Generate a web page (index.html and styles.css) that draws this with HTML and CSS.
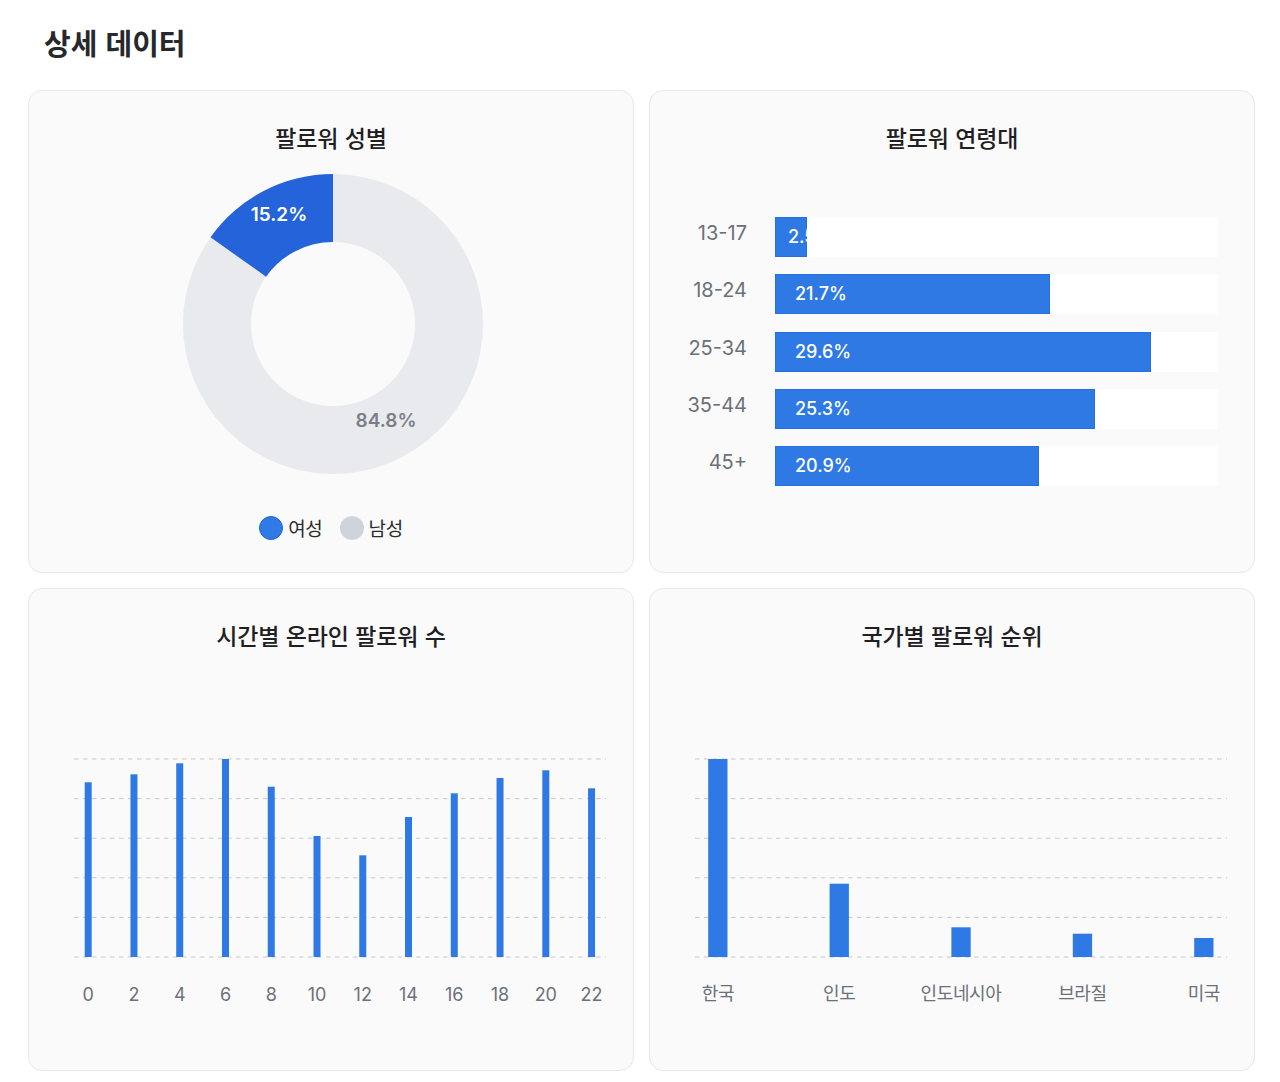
FILE: index.html
```html
<!DOCTYPE html>
<html lang="ko">
<head>
<meta charset="utf-8">
<title>상세 데이터</title>
<link rel="stylesheet" href="styles.css">
</head>
<body>
<main class="page">
  <h1 class="page-title">상세 데이터</h1>
  <section class="grid">
    <article class="card">
      <h2 class="card-title">팔로워 성별</h2>
      <svg class="chart" viewBox="0 0 604 340" width="604" height="340">
        <circle cx="304" cy="172" r="116" fill="none" stroke="#e9eaee" stroke-width="68"/>
        <path d="M304,22 A150,150 0 0 0 181.55,85.36 L237.06,124.64 A82,82 0 0 1 304,90 Z" fill="#2463da"/>
        <text class="pie-label pie-label-in" x="250" y="69">15.2%</text>
        <text class="pie-label pie-label-out" x="357" y="275">84.8%</text>
      </svg>
      <div class="legend">
        <span class="legend-item"><i class="dot dot-blue"></i>여성</span>
        <span class="legend-item"><i class="dot dot-gray"></i>남성</span>
      </div>
    </article>

    <article class="card">
      <h2 class="card-title">팔로워 연령대</h2>
      <div class="ages">
        <div class="age-row">
          <span class="age-label">13-17</span>
          <div class="track"><div class="bar bar-narrow" style="width:7.14%">2.5%</div></div>
        </div>
        <div class="age-row">
          <span class="age-label">18-24</span>
          <div class="track"><div class="bar" style="width:62%">21.7%</div></div>
        </div>
        <div class="age-row">
          <span class="age-label">25-34</span>
          <div class="track"><div class="bar" style="width:84.8%">29.6%</div></div>
        </div>
        <div class="age-row">
          <span class="age-label">35-44</span>
          <div class="track"><div class="bar" style="width:72.3%">25.3%</div></div>
        </div>
        <div class="age-row">
          <span class="age-label">45+</span>
          <div class="track"><div class="bar" style="width:59.7%">20.9%</div></div>
        </div>
      </div>
    </article>

    <article class="card">
      <h2 class="card-title">시간별 온라인 팔로워 수</h2>
      <svg class="chart" viewBox="0 0 604 390" width="604" height="390">
        <g class="grid-lines">
          <line x1="45" x2="577" y1="109" y2="109"/>
          <line x1="45" x2="577" y1="148.6" y2="148.6"/>
          <line x1="45" x2="577" y1="188.2" y2="188.2"/>
          <line x1="45" x2="577" y1="227.8" y2="227.8"/>
          <line x1="45" x2="577" y1="267.4" y2="267.4"/>
          <line x1="45" x2="577" y1="307" y2="307"/>
        </g>
        <g class="bars">
          <rect x="55.7" y="132.3" width="7" height="174.7"/>
          <rect x="101.46" y="124.3" width="7" height="182.7"/>
          <rect x="147.22" y="113.3" width="7" height="193.7"/>
          <rect x="192.98" y="109" width="7" height="198"/>
          <rect x="238.74" y="136.7" width="7" height="170.3"/>
          <rect x="284.5" y="186" width="7" height="121"/>
          <rect x="330.26" y="205.3" width="7" height="101.7"/>
          <rect x="376.02" y="167" width="7" height="140"/>
          <rect x="421.78" y="143.3" width="7" height="163.7"/>
          <rect x="467.54" y="128" width="7" height="179"/>
          <rect x="513.3" y="120.3" width="7" height="186.7"/>
          <rect x="559.06" y="138.3" width="7" height="168.7"/>
        </g>
        <g class="axis-num">
          <text x="59.2" y="351">0</text>
          <text x="104.96" y="351">2</text>
          <text x="150.72" y="351">4</text>
          <text x="196.48" y="351">6</text>
          <text x="242.24" y="351">8</text>
          <text x="288" y="351">10</text>
          <text x="333.76" y="351">12</text>
          <text x="379.52" y="351">14</text>
          <text x="425.28" y="351">16</text>
          <text x="471.04" y="351">18</text>
          <text x="516.8" y="351">20</text>
          <text x="562.56" y="351">22</text>
        </g>
      </svg>
    </article>

    <article class="card">
      <h2 class="card-title">국가별 팔로워 순위</h2>
      <svg class="chart" viewBox="0 0 604 390" width="604" height="390">
        <g class="grid-lines">
          <line x1="45" x2="577" y1="109" y2="109"/>
          <line x1="45" x2="577" y1="148.6" y2="148.6"/>
          <line x1="45" x2="577" y1="188.2" y2="188.2"/>
          <line x1="45" x2="577" y1="227.8" y2="227.8"/>
          <line x1="45" x2="577" y1="267.4" y2="267.4"/>
          <line x1="45" x2="577" y1="307" y2="307"/>
        </g>
        <g class="bars">
          <rect x="58.2" y="109" width="19.3" height="198"/>
          <rect x="179.6" y="233.7" width="19.3" height="73.3"/>
          <rect x="301.4" y="277.3" width="19.3" height="29.7"/>
          <rect x="422.8" y="283.7" width="19.3" height="23.3"/>
          <rect x="544.2" y="288" width="19.3" height="19"/>
        </g>
        <g class="axis-text">
          <text x="67.9" y="350">한국</text>
          <text x="189.2" y="350">인도</text>
          <text x="311" y="350">인도네시아</text>
          <text x="432.4" y="350">브라질</text>
          <text x="553.8" y="350">미국</text>
        </g>
      </svg>
    </article>
  </section>
</main>
</body>
</html>
```

FILE: styles.css
```css
* { box-sizing: border-box; }

html, body {
  margin: 0;
  background: #ffffff;
}

body {
  font-family: "Noto Sans CJK KR", "Noto Sans", sans-serif;
  color: #222326;
}

.page {
  padding: 22px 25px 0 28px;
}

.page-title {
  margin: 0 0 28px 16px;
  font-size: 29px;
  line-height: 40px;
  font-weight: 700;
  letter-spacing: 0;
  color: #26282c;
}

.grid {
  display: grid;
  grid-template-columns: 606px 606px;
  grid-auto-rows: 483px;
  gap: 15px;
}

.card {
  background: #fafafa;
  border: 1px solid #e8e8e8;
  border-radius: 14px;
  padding-top: 32px;
  overflow: hidden;
}

.card-title {
  margin: 0;
  text-align: center;
  font-size: 23px;
  line-height: 28px;
  height: 29px;
  font-weight: 500;
  letter-spacing: -0.1px;
  color: #1f2023;
}

.chart {
  display: block;
}

.pie-label {
  font-family: Inter, "Noto Sans", sans-serif;
  font-size: 19px;
  text-anchor: middle;
}

.pie-label-in {
  fill: #ffffff;
  font-weight: 600;
}

.pie-label-out {
  fill: #7a7f87;
  font-weight: 600;
}

.legend {
  margin-top: 24px;
  display: flex;
  justify-content: center;
  gap: 17px;
  height: 24px;
}

.legend-item {
  display: flex;
  align-items: center;
  gap: 5px;
  font-size: 19px;
  line-height: 24px;
  letter-spacing: -0.3px;
  color: #2a2b2e;
}

.dot {
  display: block;
  width: 24px;
  height: 24px;
  border-radius: 50%;
}

.dot-blue {
  background: #2f7ae5;
  border: 1px solid #1f66d6;
}

.dot-gray {
  background: #cfd4dc;
}

.ages {
  margin-top: 65px;
  padding: 0 36px 0 23px;
  display: flex;
  flex-direction: column;
  gap: 17.3px;
}

.age-row {
  display: flex;
  align-items: flex-start;
  gap: 28px;
  height: 40px;
}

.age-label {
  width: 74px;
  flex: none;
  text-align: right;
  font-family: Inter, "Noto Sans", sans-serif;
  font-size: 20px;
  line-height: 32px;
  color: #6b7079;
}

.track {
  flex: 1;
  height: 40px;
  background: #ffffff;
}

.bar {
  height: 40px;
  background: #2f79e5;
  box-shadow: inset 0 0 0 1px #276fdd;
  overflow: hidden;
  white-space: nowrap;
  padding-left: 20px;
  font-family: Inter, "Noto Sans", sans-serif;
  font-size: 18px;
  font-weight: 500;
  line-height: 40px;
  color: #ffffff;
}

.bar-narrow {
  padding-left: 13px;
}

.grid-lines line {
  stroke: #c6c8cc;
  stroke-width: 1;
  stroke-dasharray: 4.5 4.5;
}

.bars rect {
  fill: #2f79e5;
}

.axis-num text {
  font-family: Inter, "Noto Sans", sans-serif;
  font-size: 18px;
  fill: #6b7079;
  text-anchor: middle;
}

.axis-text text {
  font-family: "Noto Sans CJK KR", "Noto Sans", sans-serif;
  font-size: 18px;
  letter-spacing: -0.4px;
  fill: #6b7079;
  text-anchor: middle;
}
```
